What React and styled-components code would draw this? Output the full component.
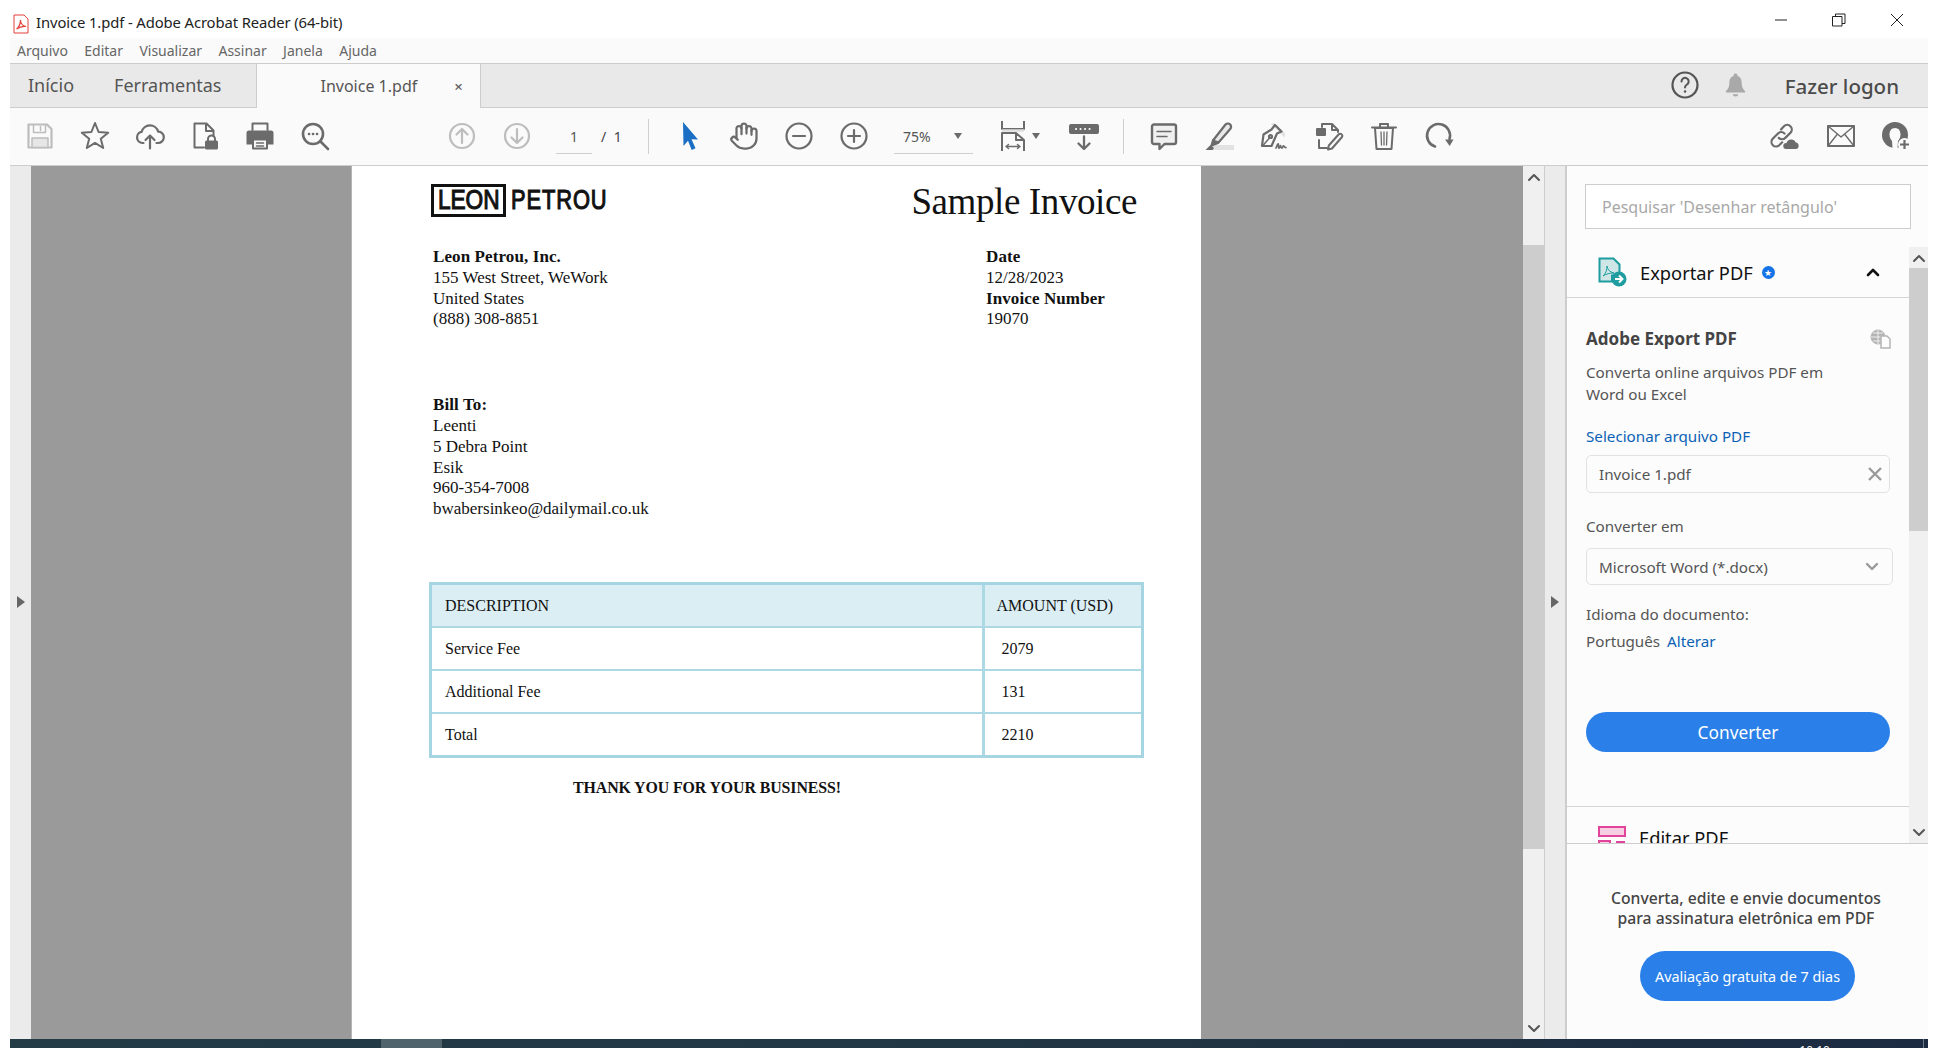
import styled, { createGlobalStyle } from "styled-components";
import { Hand } from "lucide-react";

const uiFont = `"Noto Sans", "Open Sans", "Liberation Sans", sans-serif`;
const docFont = `"Liberation Serif", serif`;

const GlobalStyle = createGlobalStyle`
  html, body {
    margin: 0;
    padding: 0;
    background: #fff;
    font-family: ${uiFont};
    overflow: hidden;
  }
  * { box-sizing: border-box; }
`;

const Win = styled.div`
  width: 1938px;
  height: 1048px;
  display: flex;
  flex-direction: column;
  background: #fff;
`;

const TitleBar = styled.div`
  height: 38px;
  flex: none;
  display: flex;
  align-items: center;
  padding: 9px 0 0 13px;
  font-size: 14.8px;
  color: #222;
`;

const TitleText = styled.span`
  margin-left: 7px;
  margin-top: -3px;
  letter-spacing: -0.1px;
`;

const WinButtons = styled.div`
  margin-left: auto;
  display: flex;
  margin-right: 12px;
  margin-top: -7px;
`;

const WinButton = styled.div`
  width: 58px;
  height: 20px;
  display: flex;
  align-items: center;
  justify-content: center;
`;

const Body = styled.div`
  flex: 1;
  min-height: 0;
  margin: 0 10px;
  display: flex;
  flex-direction: column;
`;

const MenuBar = styled.div`
  height: 25px;
  flex: none;
  background: #fafafa;
  display: flex;
  align-items: center;
  padding: 0 0 1px 7px;
  gap: 16.4px;
  font-size: 14px;
  color: #666;
`;

const TabRow = styled.div`
  height: 45px;
  flex: none;
  display: flex;
  align-items: stretch;
  background: #e9e9e9;
  border-top: 1px solid #cdcdcd;
  border-bottom: 1px solid #cdcdcd;
  color: #555;
`;

const HomeTab = styled.div`
  font-size: 18px;
  padding-top: 9px;
  margin-left: ${(p) => p.$left}px;
`;

const OpenTab = styled.div`
  margin-left: 35px;
  width: 225px;
  margin-bottom: -1px;
  background: #fafafa;
  border-left: 1px solid #cdcdcd;
  border-right: 1px solid #cdcdcd;
  display: flex;
  align-items: center;
  font-size: 16px;
  padding-left: 63px;
  padding-bottom: 1px;
`;

const TabClose = styled.span`
  margin-left: 37px;
  font-size: 15px;
  font-weight: 600;
  color: #666;
`;

const TabRight = styled.div`
  margin-left: auto;
  display: flex;
  align-items: center;
  padding-right: 29px;
  padding-bottom: 2px;
`;

const LogonText = styled.span`
  margin-left: 39px;
  font-size: 20.5px;
  font-weight: 500;
  padding-top: 3px;
  color: #4b4b4b;
`;

const Toolbar = styled.div`
  height: 58px;
  flex: none;
  background: #fafafa;
  border-bottom: 1px solid #cdcdcd;
  display: flex;
  align-items: center;
  padding: 0 4px 1px 2px;
`;

const Tool = styled.div`
  width: ${(p) => p.$w || 55}px;
  margin-left: ${(p) => p.$ml || 0}px;
  height: 32px;
  flex: none;
  display: flex;
  align-items: center;
  justify-content: center;
  color: ${(p) => (p.$off ? "#bdbdbd" : "#6b6b6b")};
`;

const PageInput = styled.div`
  margin-left: 12px;
  width: 36px;
  height: 35px;
  border-bottom: 1px solid #cfcfcf;
  font-size: 14px;
  color: #555;
  display: flex;
  align-items: center;
  justify-content: center;
  margin-top: 1px;
`;

const PageTotal = styled.div`
  margin-left: 9px;
  width: 34px;
  font-size: 14px;
  color: #444;
  word-spacing: 4px;
`;

const ToolSep = styled.div`
  width: 1px;
  height: 35px;
  background: #d0d0d0;
  flex: none;
  margin-left: ${(p) => p.$ml}px;
  margin-right: ${(p) => p.$mr}px;
`;

const ZoomBox = styled.div`
  margin-left: 13px;
  width: 79px;
  height: 35px;
  border-bottom: 1px solid #cfcfcf;
  display: flex;
  align-items: center;
  justify-content: space-between;
  padding: 0 11px 0 9px;
  font-size: 14px;
  color: #555;
  margin-top: 1px;
`;

const Caret = styled.div`
  width: 0;
  height: 0;
  border-left: 4px solid transparent;
  border-right: 4px solid transparent;
  border-top: 6px solid #6b6b6b;
`;

const FitCaret = styled(Caret)`
  margin-left: -2px;
  margin-right: 22px;
  flex: none;
`;

const RightTools = styled.div`
  margin-left: auto;
  display: flex;
`;

const Main = styled.div`
  flex: 1;
  min-height: 0;
  display: flex;
`;

const Rail = styled.div`
  width: ${(p) => p.$w}px;
  flex: none;
  background: #ebebeb;
  display: flex;
  align-items: center;
  justify-content: center;
  padding-bottom: 2px;
  ${(p) => p.$line && "border-right: 2px solid #cdcdcd; border-left: 1px solid #cdcdcd;"}
`;

const RailArrow = styled.div`
  width: 0;
  height: 0;
  border-top: 6px solid transparent;
  border-bottom: 6px solid transparent;
  border-left: 8px solid #666;
`;

const DocArea = styled.div`
  width: 1492px;
  flex: none;
  background: #9a9a9a;
  display: flex;
  justify-content: flex-start;
  overflow: hidden;
`;

const Page = styled.div`
  margin-left: 320px;
  width: 850px;
  height: 100%;
  background: #fff;
  border-left: 1px solid #b5b5b5;
  padding: 18px 0 0 81px;
  font-family: ${docFont};
  color: #111;
  font-size: 17px;
  line-height: 20.8px;
`;

const DocHead = styled.div`
  display: flex;
  justify-content: space-between;
  align-items: flex-start;
  width: 704px;
`;

const Logo = styled.div`
  display: flex;
  align-items: center;
  margin-left: -2px;
  height: 33px;
  font-family: "Liberation Sans", sans-serif;
  font-size: 27px;
  color: #111;
  -webkit-text-stroke: 1.1px #111;
`;

const LogoBox = styled.div`
  width: 75px;
  height: 33px;
  border: 3.5px solid #111;
  display: flex;
  align-items: center;
  justify-content: center;
  line-height: 1;
  flex: none;
`;

const LogoWord = styled.span`
  display: inline-block;
  transform: scaleX(0.84);
  transform-origin: center;
`;

const LogoRest = styled.div`
  margin-left: 5px;
  width: 93px;
  letter-spacing: 1.1px;
  transform: scaleX(0.81);
  transform-origin: left center;
`;

const DocTitle = styled.div`
  font-size: 37px;
  line-height: 1;
  letter-spacing: -0.4px;
  margin-top: -1px;
`;

const InfoRow = styled.div`
  display: flex;
  margin-top: 27px;
`;

const InfoCol = styled.div`
  width: ${(p) => p.$w}px;
`;

const Line = styled.div`
  font-weight: ${(p) => (p.$b ? 700 : 400)};
  letter-spacing: ${(p) => (p.$b ? 0.1 : 0)}px;
  white-space: nowrap;
`;

const BillTo = styled.div`
  margin-top: 65px;
`;

const Table = styled.div`
  margin: 62px 0 0 -4px;
  width: 715px;
  border: 3px solid #a5d5e2;
  display: grid;
  grid-template-columns: 549.5px 1fr;
`;

const Cell = styled.div`
  height: ${(p) => p.$h}px;
  background: ${(p) => (p.$head ? "#dbeef4" : "#fff")};
  border-bottom: ${(p) => (p.$last ? "0" : "2px solid #add9e5")};
  border-left: ${(p) => (p.$right ? "3px solid #add9e5" : "0")};
  padding: 2px 0 0 ${(p) => (p.$right ? (p.$head ? 12 : 17) : 13)}px;
  display: flex;
  align-items: center;
  white-space: nowrap;
  font-size: 16px;
`;

const Thanks = styled.div`
  margin: 20px 0 0 140px;
  font-size: 15.9px;
  font-weight: 700;
  letter-spacing: -0.1px;
`;

const Panel = styled.div`
  flex: 1;
  min-width: 0;
  background: #fcfcfc;
  display: flex;
  flex-direction: column;
`;

const SearchWrap = styled.div`
  height: 81px;
  flex: none;
  padding: 18px 17px 0 18px;
`;

const SearchBox = styled.div`
  height: 45px;
  background: #fff;
  border: 1px solid #cdcdcd;
  display: flex;
  align-items: center;
  padding: 0 16px;
  font-size: 16px;
  color: #a8a8a8;
`;

const ScrollPart = styled.div`
  height: 597px;
  flex: none;
  display: flex;
  border-bottom: 1px solid #cdcdcd;
  overflow: hidden;
`;

const ScrollInner = styled.div`
  flex: 1;
  min-width: 0;
  overflow: hidden;
`;

const SectionHead = styled.div`
  height: ${(p) => p.$h}px;
  display: flex;
  align-items: center;
  padding: ${(p) => p.$pt || 0}px 29px 0 31px;
  font-size: 18.3px;
  color: #111;
  ${(p) => p.$line && "border-bottom: 1px solid #d5d5d5;"}
`;

const SectionName = styled.span`
  margin-left: 13px;
`;

const Badge = styled.span`
  margin-left: 9px;
  width: 13px;
  height: 13px;
  border-radius: 50%;
  background: #1473e6;
  color: #fff;
  font-size: 9px;
  line-height: 13px;
  text-align: center;
`;

const PushRight = styled.span`
  margin-left: auto;
  display: flex;
`;

const SectionBody = styled.div`
  height: 509px;
  padding: 0 18px 0 19px;
  border-bottom: 1px solid #d5d5d5;
  font-size: 15.2px;
  color: #555;
`;

const ExportHead = styled.div`
  display: flex;
  justify-content: space-between;
  align-items: center;
  padding-top: 29px;
`;

const ExportTitle = styled.div`
  font-size: 17px;
  font-weight: 700;
  color: #444;
`;

const Text = styled.div`
  line-height: 22px;
  margin-top: ${(p) => p.$mt || 0}px;
  white-space: nowrap;
`;

const Link = styled.span`
  color: #0b62b5;
  margin-left: ${(p) => p.$ml || 0}px;
`;

const Field = styled.div`
  margin-top: ${(p) => p.$mt}px;
  width: ${(p) => p.$w}px;
  height: ${(p) => p.$h}px;
  border: 1px solid #e2e2e2;
  border-radius: 5px;
  background: #fcfcfc;
  display: flex;
  align-items: center;
  justify-content: space-between;
  padding: 0 7px 0 12px;
  font-size: 15.2px;
  color: #555;
`;

const FieldChevron = styled.span`
  margin-right: 6px;
  display: flex;
`;

const BlueButton = styled.div`
  margin: ${(p) => p.$m};
  width: ${(p) => p.$w}px;
  height: ${(p) => p.$h}px;
  border-radius: ${(p) => p.$h / 2}px;
  background: #2a80e8;
  color: #fff;
  font-size: ${(p) => p.$fs}px;
  display: flex;
  align-items: center;
  justify-content: center;
  flex: none;
`;

const Promo = styled.div`
  flex: 1;
  display: flex;
  flex-direction: column;
  align-items: center;
  padding: 44px 0 0;
`;

const PromoText = styled.div`
  text-align: center;
  font-size: 15.7px;
  line-height: 20px;
  font-weight: 500;
  color: #444;
  margin-right: 3px;
`;

const Scroll = styled.div`
  width: ${(p) => p.$w}px;
  flex: none;
  background: #f0f0f0;
  display: flex;
  flex-direction: column;
  align-items: stretch;
`;

const ScrollBtn = styled.div`
  height: 21px;
  flex: none;
  display: flex;
  align-items: center;
  justify-content: center;
`;

const ScrollTrack = styled.div`
  flex: 1;
  min-height: 0;
  padding-top: ${(p) => p.$top}px;
`;

const Thumb = styled.div`
  height: ${(p) => p.$h}px;
  background: #cdcdcd;
`;

const Taskbar = styled.div`
  height: 9px;
  flex: none;
  margin: 0 10px;
  background: linear-gradient(90deg, #233c46 0%, #223744 50%, #1c2b42 100%);
  display: flex;
  overflow: hidden;
`;

const TaskItem = styled.div`
  margin-left: 371px;
  width: 61px;
  background: #4f636c;
`;

const Clock = styled.div`
  margin-left: auto;
  margin-right: 93px;
  padding-top: 6px;
  font-size: 12px;
  line-height: 12px;
  color: #fff;
`;

const TaskEdge = styled.div`
  width: 1px;
  background: #6c7a8a;
  margin-right: 4px;
`;

// toolbar drawings
const Svg = ({ size = 30, vb = 30, sw = 2, children }) => (
  <svg width={size} height={size} viewBox={`0 0 ${vb} ${vb}`} fill="none" stroke="currentColor" strokeWidth={sw} strokeLinejoin="round" strokeLinecap="round">
    {children}
  </svg>
);

const PdfIcon = () => (
  <svg width="16" height="20" viewBox="0 0 16 20" fill="none">
    <path d="M1 1h10l4 4v14H1z" fill="#fff" stroke="#e5403a" />
    <path d="M3.500 15c2-1 4-5 4-9 0 3 2 6 5.500 6.500-3-.5-6.500.5-9.500 2.500z" stroke="#e5403a" strokeWidth="1.200" />
  </svg>
);

const SaveIcon = () => (
  <Svg sw={2.2}>
    <path d="M3.500 3.500h18.500l4.500 4.500v18.500h-23z" />
    <path d="M8.500 3.500v8h12v-8M15.500 5.500v4" strokeWidth="1.500" />
    <rect x="7" y="17" width="16" height="9.500" fill="#e6e6e6" strokeWidth="1.500" />
  </Svg>
);

const StarIcon = () => (
  <Svg sw={2}>
    <path d="M15 2l3.600 9 9.600.7-7.400 6 2.400 9.300-8.200-5.100-8.200 5.100 2.400-9.300-7.400-6 9.600-.7z" />
  </Svg>
);

const CloudIcon = () => (
  <Svg sw={2.200}>
    <path d="M8.500 22H7.500a5.600 5.600 0 0 1-.9-11.100 8.600 8.600 0 0 1 16.600-.3A5.700 5.700 0 0 1 23 22h-1.500" />
    <path d="M15 27.500V14.500M10.500 19l4.500-4.500 4.500 4.500" />
  </Svg>
);

const DocLockIcon = () => (
  <Svg sw={2}>
    <path d="M14 26.500H4.500V2.500h12l7 7v5M16 3v7h7.500" />
    <rect x="15" y="19.500" width="13" height="9" rx="1.500" fill="currentColor" stroke="none" />
    <path d="M18 19.500V18a3.500 3.500 0 0 1 7 0v1.500" />
  </Svg>
);

const PrintIcon = () => (
  <Svg sw={2}>
    <path d="M7.500 9V2.500h15V9" />
    <path d="M4 9.500h22a2.500 2.500 0 0 1 2.500 2.500v11.500h-27V12A2.500 2.500 0 0 1 4 9.500z" fill="currentColor" stroke="none" />
    <rect x="8" y="18.500" width="14" height="9" fill="#fafafa" />
    <path d="M11.500 22h7M11.500 25h7" strokeWidth="1.500" />
  </Svg>
);

const FindIcon = () => (
  <Svg sw={2.600}>
    <circle cx="13" cy="13" r="10" />
    <path d="M20.500 20.500L28 28" />
    <path d="M9 13h.1M13 13h.1M17 13h.1" />
  </Svg>
);

const CircleUp = ({ down }) => (
  <Svg sw={2.200}>
    <circle cx="15" cy="15" r="12" />
    {down ? <path d="M15 8v14M9.500 16.500l5.500 5.500 5.500-5.500" /> : <path d="M15 22V8M9.500 13.500L15 8l5.500 5.500" />}
  </Svg>
);

const PointerIcon = () => (
  <svg width="30" height="30" viewBox="0 0 30 30">
    <path d="M9 1l15 17.500-6.500-.3 4 9-3.800 1.800-3.700-9.300L9.500 25z" fill="#1a6fc4" />
  </svg>
);

const ZoomCircle = ({ plus }) => (
  <Svg sw={2.200}>
    <circle cx="15" cy="15" r="12.500" />
    <path d="M9 15h12" />
    {plus && <path d="M15 9v12" />}
  </Svg>
);

const FitIcon = () => (
  <Svg sw={2}>
    <path d="M4 0v8h22V0" />
    <path d="M4 9.500h22" stroke="#dedede" strokeWidth="2.500" strokeLinecap="butt" />
    <path d="M4 30V12h14l8 7v11M18 12v7h8" />
    <path d="M8 25.500h14M10.500 23.500l-2.500 2 2.500 2M19.500 23.500l2.500 2-2.500 2" strokeWidth="1.400" />
  </Svg>
);

const ReadIcon = () => (
  <Svg sw={2}>
    <rect x="1" y="4" width="28" height="8" rx="1" fill="currentColor" stroke="currentColor" />
    <path d="M7 8h.1M11.500 8h.1M16 8h.1M20.500 8h.1" stroke="#fff" strokeWidth="2" />
    <path d="M15 15.500V28M9.500 22.500L15 28l5.500-5.500" strokeWidth="2.300" />
  </Svg>
);

const CommentIcon = () => (
  <Svg sw={2.400}>
    <path d="M5 3.500h20a2 2 0 0 1 2 2V21a2 2 0 0 1-2 2H15.500l-5 5v-5H5a2 2 0 0 1-2-2V5.500a2 2 0 0 1 2-2z" fill="#f0f0f0" />
    <path d="M8 10.500h14M8 15.500h10" strokeWidth="1.500" />
  </Svg>
);

const MarkerIcon = () => (
  <Svg sw={2.200}>
    <path d="M6 24h24v5H6z" fill="#e2e2e2" stroke="none" />
    <path d="M21.500 3.500a3.200 3.200 0 0 1 4.700 4.500L14.500 21.500l-5.500-2z" fill="#e8e8e8" />
    <path d="M9 19.500l-1.500 5 6.500-2.500" fill="currentColor" />
    <path d="M1.500 29l5-5 3.500 3-1.500 2z" fill="currentColor" stroke="none" />
  </Svg>
);

const SignIcon = () => (
  <Svg sw={2.200}>
    <path d="M15 2l11 10v5L12 3z" fill="#e2e2e2" stroke="none" />
    <path d="M16 4l6.500 6.500-4.500 2-5.500 12.500H3l1.500-11.500 8-5z" />
    <path d="M3.500 25l7-8" strokeWidth="1.500" />
    <circle cx="11.500" cy="15.500" r="1.500" />
    <path d="M17 27c2-5 2.500-5 2.500-2s1 3 2-.5c.5 3 2 3 2.500 1s1.500 1.500 3 1" strokeWidth="1.700" />
  </Svg>
);

const EditIcon = () => (
  <Svg sw={2}>
    <path d="M8 6V3h10l6 6v2M18 3v6h6M5 19v8h8" />
    <rect x="2" y="7" width="10" height="8" rx="1" fill="currentColor" stroke="none" />
    <path d="M25 13a2.200 2.200 0 0 1 3 3L18 27.500l-4 1 .8-4z" fill="#fafafa" />
  </Svg>
);

const TrashIcon = () => (
  <Svg sw={2}>
    <path d="M3 6.500h24M11 6V3h8v3" />
    <path d="M6 7l1.500 21h15L24 7z" />
    <path d="M12 11l.5 13M15 11v13M18 11l-.5 13" strokeWidth="1.300" />
  </Svg>
);

const RotateIcon = () => (
  <Svg sw={2.600}>
    <path d="M11 25.500A11.500 11.500 0 1 1 25.500 18" />
    <path d="M21 18.500h8.500l-3.800 6.500z" fill="currentColor" stroke="none" />
  </Svg>
);

const LinkCloudIcon = () => (
  <Svg sw={2.200}>
    <path d="M12 8.500l3-3.300a4.600 4.600 0 0 1 6.600 6.400l-5.300 5.300a4.600 4.600 0 0 1-6.500 0" />
    <path d="M15.500 12.500a4.600 4.600 0 0 0-6.500 0l-5.300 5.300a4.600 4.600 0 0 0 6.500 6.500l3-3" />
    <path d="M17 28a3 3 0 0 1 .5-6 5 5 0 0 1 9.300-.5A3.300 3.300 0 0 1 27 28z" fill="currentColor" stroke="none" />
  </Svg>
);

const MailIcon = () => (
  <Svg sw={2}>
    <rect x="2" y="5" width="26" height="20" />
    <path d="M2 5l13 11L28 5M2 25l9.500-12M28 25L18.500 13" strokeWidth="1.400" />
  </Svg>
);

const UserIcon = () => (
  <Svg sw={2}>
    <circle cx="14" cy="14" r="13" fill="currentColor" stroke="none" />
    <path d="M14 7c3.500 0 5.500 2.800 5.500 6.500 0 2.800-1.200 5-2.500 6.500l-.5 7h-5l-.5-7c-1.300-1.500-2.500-3.700-2.500-6.500C8.500 9.800 10.500 7 14 7z" fill="#fafafa" stroke="none" />
    <circle cx="23.500" cy="23.500" r="6.500" fill="#fafafa" stroke="none" />
    <path d="M23.500 19v9M19 23.500h9" strokeWidth="2.200" strokeLinecap="butt" />
  </Svg>
);

const HelpIcon = () => (
  <Svg sw={2}>
    <circle cx="15" cy="15" r="12.500" strokeWidth="2.200" />
    <path d="M11.500 11.500a3.600 3.600 0 1 1 5.500 3c-1.300.9-2 1.500-2 3" />
    <path d="M15 21.500h.1" strokeWidth="2.400" />
  </Svg>
);

const BellIcon = () => (
  <svg width="24" height="28" viewBox="0 0 24 28">
    <path d="M12 1a2 2 0 0 1 2 2.500c3.500 1 5 4 5 7.500 0 5 1.500 7.500 4 10v1.500H1V21c2.500-2.500 4-5 4-10 0-3.500 1.500-6.500 5-7.500A2 2 0 0 1 12 1z" fill="#a9a9a9" />
    <path d="M9 24.500h6a3 2.500 0 0 1-6 0z" fill="#a9a9a9" />
  </svg>
);

const ExportIcon = () => (
  <svg width="29" height="30" viewBox="0 0 29 30" fill="none">
    <path d="M1.500 1.500h14l6 6v11H14v6H1.500z" fill="#cfe6e6" stroke="#1f9c9f" strokeWidth="2" />
    <path d="M5 19c3-2 4-7 4-10 .5 4 3 6 7 7-4-.2-8 1-11 3z" stroke="#1f9c9f" strokeWidth="1" />
    <circle cx="21" cy="22" r="7.500" fill="#1f9c9f" />
    <path d="M17 22h7M21 18.500l3.500 3.500-3.500 3.500" stroke="#fff" strokeWidth="2" />
  </svg>
);

const EditPdfIcon = () => (
  <svg width="28" height="24" viewBox="0 0 28 24" fill="none">
    <rect x="1" y="1" width="26" height="9" fill="#f6cfe3" stroke="#e0459b" strokeWidth="2" />
    <rect x="1" y="15" width="11" height="8" fill="#f6cfe3" stroke="#e0459b" strokeWidth="2" />
    <path d="M18 16h9" stroke="#e0459b" strokeWidth="2" />
  </svg>
);

const GlobeDocIcon = () => (
  <svg width="21" height="20" viewBox="0 0 21 20" fill="none" stroke="#b4b4b4">
    <circle cx="8" cy="8" r="7" fill="#b4b4b4" />
    <path d="M1 8h14M8 1v14M3 4h10M3 12h10" stroke="#fcfcfc" strokeWidth="0.800" />
    <path d="M11 7h6l3 3v9h-9z" fill="#fcfcfc" strokeWidth="1.500" />
  </svg>
);

const Chevron = ({ up, size = 10, color = "#555", sw = 2 }) => (
  <svg width={size * 1.4} height={size} viewBox="0 0 14 10" fill="none" stroke={color} strokeWidth={sw} strokeLinecap="round" strokeLinejoin="round">
    <path d={up ? "M2 8l5-5 5 5" : "M2 2l5 5 5-5"} />
  </svg>
);

const WinIcon = ({ d, extra }) => (
  <svg width="14" height="14" viewBox="0 0 14 14" fill="none" stroke="#222" strokeWidth="1">
    <path d={d} />
    {extra && <path d={extra} />}
  </svg>
);

const App = () => {
  return (
    <Win>
      <GlobalStyle />
      <TitleBar>
        <PdfIcon />
        <TitleText>Invoice 1.pdf - Adobe Acrobat Reader (64-bit)</TitleText>
        <WinButtons>
          <WinButton><WinIcon d="M1 7h12" /></WinButton>
          <WinButton><WinIcon d="M.5 3.500h9.500v9.500H.5z" extra="M3.500 3.500V1h9.500v9.500H10" /></WinButton>
          <WinButton><WinIcon d="M1 1l12 12M13 1L1 13" /></WinButton>
        </WinButtons>
      </TitleBar>
      <Body>
        <MenuBar>
          <span>Arquivo</span>
          <span>Editar</span>
          <span>Visualizar</span>
          <span>Assinar</span>
          <span>Janela</span>
          <span>Ajuda</span>
        </MenuBar>
        <TabRow>
          <HomeTab $left={18}>Início</HomeTab>
          <HomeTab $left={40}>Ferramentas</HomeTab>
          <OpenTab>
            Invoice 1.pdf
            <TabClose>×</TabClose>
          </OpenTab>
          <TabRight>
            <HelpIcon />
            <Tool $w={21} $ml={25}><BellIcon /></Tool>
            <LogonText>Fazer logon</LogonText>
          </TabRight>
        </TabRow>
        <Toolbar>
          <Tool $off><SaveIcon /></Tool>
          <Tool><StarIcon /></Tool>
          <Tool><CloudIcon /></Tool>
          <Tool><DocLockIcon /></Tool>
          <Tool><PrintIcon /></Tool>
          <Tool><FindIcon /></Tool>
          <Tool $off $ml={92}><CircleUp /></Tool>
          <Tool $off><CircleUp down /></Tool>
          <PageInput>1</PageInput>
          <PageTotal>/ 1</PageTotal>
          <ToolSep $ml={13} $mr={12} />
          <Tool><PointerIcon /></Tool>
          <Tool><Hand size={30} strokeWidth={1.8} /></Tool>
          <Tool><ZoomCircle /></Tool>
          <Tool><ZoomCircle plus /></Tool>
          <ZoomBox>75%<Caret /></ZoomBox>
          <Tool $w={42} $ml={19}><FitIcon /></Tool>
          <FitCaret />
          <Tool $w={44}><ReadIcon /></Tool>
          <ToolSep $ml={17} $mr={12} />
          <Tool><CommentIcon /></Tool>
          <Tool><MarkerIcon /></Tool>
          <Tool><SignIcon /></Tool>
          <Tool><EditIcon /></Tool>
          <Tool><TrashIcon /></Tool>
          <Tool><RotateIcon /></Tool>
          <RightTools>
            <Tool $w={58}><LinkCloudIcon /></Tool>
            <Tool><MailIcon /></Tool>
            <Tool $w={56}><UserIcon /></Tool>
          </RightTools>
        </Toolbar>
        <Main>
          <Rail $w={21}><RailArrow /></Rail>
          <DocArea>
            <Page>
              <DocHead>
                <Logo>
                  <LogoBox><LogoWord>LEON</LogoWord></LogoBox>
                  <LogoRest>PETROU</LogoRest>
                </Logo>
                <DocTitle>Sample Invoice</DocTitle>
              </DocHead>
              <InfoRow>
                <InfoCol $w={553}>
                  <Line $b>Leon Petrou, Inc.</Line>
                  <Line>155 West Street, WeWork</Line>
                  <Line>United States</Line>
                  <Line>(888) 308-8851</Line>
                </InfoCol>
                <InfoCol $w={160}>
                  <Line $b>Date</Line>
                  <Line>12/28/2023</Line>
                  <Line $b>Invoice Number</Line>
                  <Line>19070</Line>
                </InfoCol>
              </InfoRow>
              <BillTo>
                <Line $b>Bill To:</Line>
                <Line>Leenti</Line>
                <Line>5 Debra Point</Line>
                <Line>Esik</Line>
                <Line>960-354-7008</Line>
                <Line>bwabersinkeo@dailymail.co.uk</Line>
              </BillTo>
              <Table>
                <Cell $head $h={43}>DESCRIPTION</Cell>
                <Cell $head $right $h={43}>AMOUNT (USD)</Cell>
                <Cell $h={43}>Service Fee</Cell>
                <Cell $right $h={43}>2079</Cell>
                <Cell $h={43}>Additional Fee</Cell>
                <Cell $right $h={43}>131</Cell>
                <Cell $last $h={41}>Total</Cell>
                <Cell $last $right $h={41}>2210</Cell>
              </Table>
              <Thanks>THANK YOU FOR YOUR BUSINESS!</Thanks>
            </Page>
          </DocArea>
          <Scroll $w={21}>
            <ScrollBtn><Chevron up /></ScrollBtn>
            <ScrollTrack $top={58}><Thumb $h={604} /></ScrollTrack>
            <ScrollBtn><Chevron /></ScrollBtn>
          </Scroll>
          <Rail $w={23} $line><RailArrow /></Rail>
          <Panel>
            <SearchWrap>
              <SearchBox>Pesquisar 'Desenhar retângulo'</SearchBox>
            </SearchWrap>
            <ScrollPart>
              <ScrollInner>
                <SectionHead $h={51} $line>
                  <ExportIcon />
                  <SectionName>Exportar PDF</SectionName>
                  <Badge>★</Badge>
                  <PushRight><Chevron up color="#111" sw={2.6} /></PushRight>
                </SectionHead>
                <SectionBody>
                  <ExportHead>
                    <ExportTitle>Adobe Export PDF</ExportTitle>
                    <GlobeDocIcon />
                  </ExportHead>
                  <Text $mt={11}>Converta online arquivos PDF em</Text>
                  <Text>Word ou Excel</Text>
                  <Text $mt={20}><Link>Selecionar arquivo PDF</Link></Text>
                  <Field $mt={8} $w={304} $h={38}>
                    Invoice 1.pdf
                    <svg width="14" height="14" viewBox="0 0 14 14" stroke="#9a9a9a" strokeWidth="2.400"><path d="M1 1l12 12M13 1L1 13" /></svg>
                  </Field>
                  <Text $mt={22}>Converter em</Text>
                  <Field $mt={11} $w={307} $h={37}>
                    Microsoft Word (*.docx)
                    <FieldChevron><Chevron color="#9a9a9a" sw={2.4} /></FieldChevron>
                  </Field>
                  <Text $mt={18}>Idioma do documento:</Text>
                  <Text $mt={5}>Português <Link $ml={3}>Alterar</Link></Text>
                  <BlueButton $m="60px 0 0" $w={304} $h={40} $fs={17.3}>Converter</BlueButton>
                </SectionBody>
                <SectionHead $h={58} $pt={3}>
                  <EditPdfIcon />
                  <SectionName>Editar PDF</SectionName>
                </SectionHead>
              </ScrollInner>
              <Scroll $w={19}>
                <ScrollBtn><Chevron up /></ScrollBtn>
                <ScrollTrack $top={0}><Thumb $h={263} /></ScrollTrack>
                <ScrollBtn><Chevron /></ScrollBtn>
              </Scroll>
            </ScrollPart>
            <Promo>
              <PromoText>
                Converta, edite e envie documentos
                <br />
                para assinatura eletrônica em PDF
              </PromoText>
              <BlueButton $m="23px 0 0" $w={215} $h={50} $fs={14.4}>Avaliação gratuita de 7 dias</BlueButton>
            </Promo>
          </Panel>
        </Main>
      </Body>
      <Taskbar>
        <TaskItem />
        <Clock>10:10</Clock>
        <TaskEdge />
      </Taskbar>
    </Win>
  );
};

export default App;
